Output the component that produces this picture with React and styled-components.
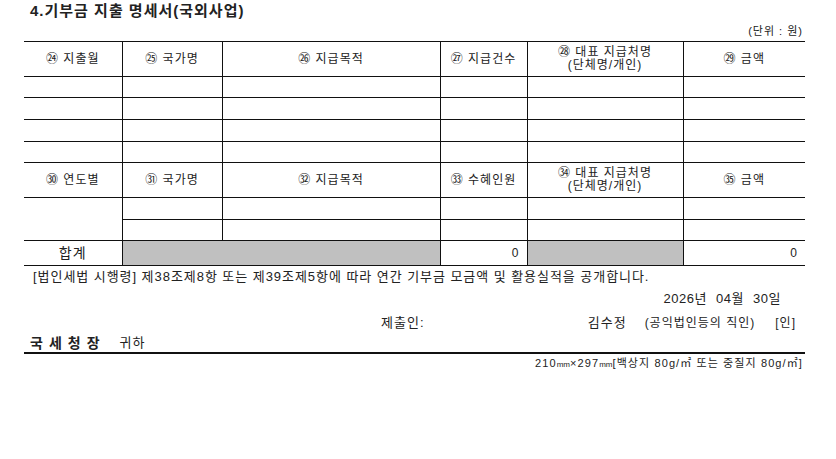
import React from "react";
import styled, { createGlobalStyle } from "styled-components";

const GlobalStyle = createGlobalStyle`
  body {
    margin: 0;
    background: #fff;
    color: #222;
    font-family: "Liberation Sans", "Noto Sans CJK KR", sans-serif;
  }
`;

const Page = styled.div`
  width: 781px;
  padding-left: 24px;
`;

const Title = styled.div`
  height: 22px;
  padding-left: 6px;
  font-size: 15px;
  font-weight: bold;
  line-height: 22px;
  letter-spacing: 1px;
`;

const Unit = styled.div`
  height: 19px;
  font-size: 11px;
  line-height: 19px;
  text-align: right;
  padding-right: 2px;
  letter-spacing: 1px;
`;

const Sheet = styled.table`
  width: 781px;
  border-collapse: collapse;
  table-layout: fixed;
  border-top: 1px solid #111;
`;

const Row = styled.tr`
  height: ${(p) => p.$h}px;
`;

const Cell = styled.td`
  border: 1px solid #111;
  padding: 0;
  font-size: ${(p) => (p.$big ? 14 : 12)}px;
  line-height: 13px;
  letter-spacing: 1px;
  text-align: ${(p) => (p.$right ? "right" : "center")};
  padding-right: ${(p) => (p.$right ? 7 : 0)}px;
  background: ${(p) => (p.$grey ? "#c0c0c0" : "#fff")};
  &:first-child {
    border-left: none;
  }
  &:last-child {
    border-right: none;
  }
`;

const Notice = styled.div`
  height: 22px;
  padding-left: 9px;
  font-size: 13px;
  line-height: 22px;
  letter-spacing: 0.95px;
`;

const DateLine = styled.div`
  height: 22px;
  font-size: 13px;
  line-height: 22px;
  text-align: right;
  padding-right: 24px;
  word-spacing: 5px;
  letter-spacing: 0.5px;
`;

const Signer = styled.div`
  display: flex;
  align-items: center;
  height: 22px;
  font-size: 13px;
  letter-spacing: 1px;
`;

const Label = styled.span`
  margin-left: 357px;
  flex: 1;
`;

const Name = styled.span`
  margin-right: 18px;
`;

const Seal = styled.span`
  font-size: 12px;
  margin-right: 20px;
`;

const Stamp = styled.span`
  font-size: 12px;
  margin-right: 9px;
`;

const Addressee = styled.div`
  display: flex;
  align-items: center;
  height: 21px;
  padding-left: 6px;
  border-bottom: 2px solid #111;
  margin-top: -1px;
`;

const Office = styled.span`
  font-size: 14px;
  font-weight: bold;
  letter-spacing: 6px;
  margin-right: 14px;
`;

const Honor = styled.span`
  font-size: 13px;
  letter-spacing: 1px;
`;

const PaperSize = styled.div`
  height: 18px;
  font-size: 11px;
  line-height: 18px;
  text-align: right;
  padding-right: 2px;
  letter-spacing: 1.1px;
`;

const Mm = styled.span`
  font-size: 8px;
  letter-spacing: 0;
`;

const headA = [
  "㉔ 지출월",
  "㉕ 국가명",
  "㉖ 지급목적",
  "㉗ 지급건수",
  ["㉘ 대표 지급처명", "(단체명/개인)"],
  "㉙ 금액",
];

const headB = [
  "㉚ 연도별",
  "㉛ 국가명",
  "㉜ 지급목적",
  "㉝ 수혜인원",
  ["㉞ 대표 지급처명", "(단체명/개인)"],
  "㉟ 금액",
];

function Head({ label }) {
  if (Array.isArray(label)) {
    return (
      <Cell>
        {label[0]}
        <br />
        {label[1]}
      </Cell>
    );
  }
  return <Cell>{label}</Cell>;
}

export default function App() {
  return (
    <Page>
      <GlobalStyle />
      <Title>4.기부금 지출 명세서(국외사업)</Title>
      <Unit>(단위 : 원)</Unit>
      <Sheet>
        <colgroup>
          <col style={{ width: 98 }} />
          <col style={{ width: 100 }} />
          <col style={{ width: 218 }} />
          <col style={{ width: 87 }} />
          <col style={{ width: 156 }} />
          <col style={{ width: 122 }} />
        </colgroup>
        <tbody>
          <Row $h={35}>
            {headA.map((h, i) => (
              <Head key={i} label={h} />
            ))}
          </Row>
          {[21, 22, 22, 21].map((h, r) => (
            <Row key={r} $h={h}>
              {headA.map((_, i) => (
                <Cell key={i} />
              ))}
            </Row>
          ))}
          <Row $h={35}>
            {headB.map((h, i) => (
              <Head key={i} label={h} />
            ))}
          </Row>
          <Row $h={22}>
            <Cell rowSpan={2} />
            {headB.slice(1).map((_, i) => (
              <Cell key={i} />
            ))}
          </Row>
          <Row $h={21}>
            {headB.slice(1).map((_, i) => (
              <Cell key={i} />
            ))}
          </Row>
          <Row $h={25}>
            <Cell $big>합계</Cell>
            <Cell $grey colSpan={2} />
            <Cell $right>0</Cell>
            <Cell $grey />
            <Cell $right>0</Cell>
          </Row>
        </tbody>
      </Sheet>
      <Notice>
        [법인세법 시행령] 제38조제8항 또는 제39조제5항에 따라 연간 기부금
        모금액 및 활용실적을 공개합니다.
      </Notice>
      <DateLine>2026년 04월 30일</DateLine>
      <Signer>
        <Label>제출인:</Label>
        <Name>김수정</Name>
        <Seal>(공익법인등의 직인)</Seal>
        <Stamp>[인]</Stamp>
      </Signer>
      <Addressee>
        <Office>국세청장</Office>
        <Honor>귀하</Honor>
      </Addressee>
      <PaperSize>
        210<Mm>mm</Mm>×297<Mm>mm</Mm>[백상지 80g/㎡ 또는 중질지 80g/㎡]
      </PaperSize>
    </Page>
  );
}
